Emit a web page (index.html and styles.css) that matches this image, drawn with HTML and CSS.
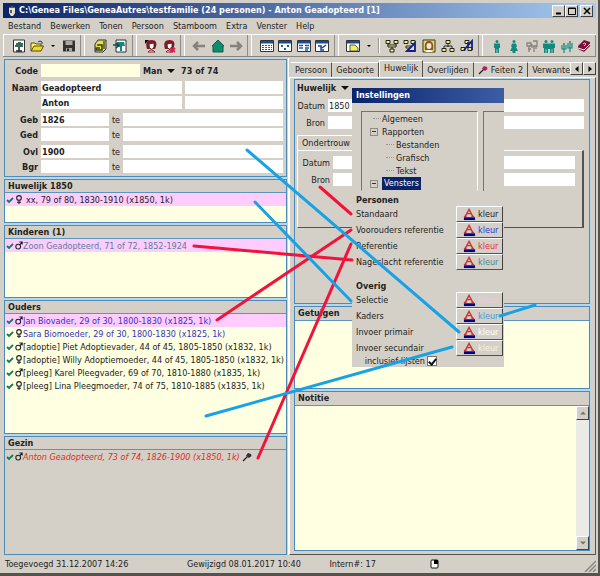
FILE: index.html
```html
<!DOCTYPE html>
<html lang="nl">
<head>
<meta charset="utf-8">
<title>testfamilie - Anton Geadopteerd</title>
<link rel="stylesheet" href="styles.css">
</head>
<body>
<svg class="defs" aria-hidden="true">
  <symbol id="check" viewBox="0 0 8 8"><path d="M1 4l2 2 4-4" fill="none" stroke="#177a55" stroke-width="1.8"/></symbol>
  <symbol id="male" viewBox="0 0 8 9"><circle cx="3.2" cy="5.6" r="2.4" fill="none" stroke="#222" stroke-width="1.1"/><path d="M4.8 3.8L7 1.2M4.4 1H7.2V3.6" fill="none" stroke="#222" stroke-width="1.1"/></symbol>
  <symbol id="female" viewBox="0 0 8 9"><circle cx="4" cy="2.9" r="2.3" fill="none" stroke="#222" stroke-width="1.1"/><path d="M4 5.2V9M2 7.2H6" fill="none" stroke="#222" stroke-width="1.1"/></symbol>
  <symbol id="pin" viewBox="0 0 10 10"><path d="M1 9l5-5" stroke="#222" stroke-width="1.2"/><path d="M4 3.5L6 1l3 1 .5 2L7 6z" fill="currentColor"/></symbol>
  <symbol id="font" viewBox="0 0 14 14"><path d="M2.500 9L6.500 1.500L10.500 9M4.500 6h4.500M1 9h3M9 9h3" fill="none" stroke="#c93434" stroke-width="1.5"/><path d="M1 10h12v3H1z" fill="#00008b"/></symbol>
  <symbol id="man" viewBox="0 0 14 14"><circle cx="7" cy="2.5" r="1.5"/><path d="M4 4.5h6V9H9v5H7.4v-4h-.8v4H5V9H4z"/></symbol>
  <symbol id="woman" viewBox="0 0 14 14"><circle cx="7" cy="2.5" r="1.5"/><path d="M5 4.5h4l1 3-1 .5 2 4H8.5v2h-3v-2H3l2-4-1-.5z"/></symbol>
  <symbol id="win" viewBox="0 0 14 14"><path d="M.5 1.5h13v11H.5z" fill="#fff" stroke="#333"/><path d="M1 2h12v2.5H1z" fill="#174ba0"/></symbol>
  <symbol id="head" viewBox="0 0 14 14"><path d="M3 10C1 4 3 1 7.500 1S14 4 11 10z" fill="#8a1824"/><path d="M5 5l5-1v4L8 10.500 5.500 9z" fill="#fff" stroke="#222" stroke-width=".8"/><path d="M4 13q3-4 7 0z" fill="#fff" stroke="#8a1824"/></symbol>
</svg>
<div class="window">
  <header class="titlebar">
    <svg class="logo" viewBox="0 0 10 12"><path d="M2 3l3-2 3 2v5l-2 3H4L2 8z" fill="#e8e0c4"/><path d="M3 2h4M4 5v3" stroke="#27344c" stroke-width="1.5"/></svg>
    <h1>C:\Genea Files\GeneaAutres\testfamilie (24 personen) - Anton Geadopteerd [1]</h1>
    <button class="cap" aria-label="Minimaliseren"><svg viewBox="0 0 8 8"><path d="M1 6.500h5" stroke="#000" stroke-width="2"/></svg></button>
    <button class="cap" aria-label="Maximaliseren"><svg viewBox="0 0 8 8"><path d="M.5 1h7v6.500h-7zM.5 1.500h7" fill="none" stroke="#000"/></svg></button>
    <button class="cap close" aria-label="Sluiten"><svg viewBox="0 0 8 8"><path d="M1 1l6 6M7 1L1 7" stroke="#000" stroke-width="1.500"/></svg></button>
  </header>
  <nav class="menu">
    <button>Bestand</button><button>Bewerken</button><button>Tonen</button><button>Persoon</button><button>Stamboom</button><button>Extra</button><button>Venster</button><button>Help</button>
  </nav>
  <div class="toolbar">
    <div class="group">
      <button aria-label="Nieuw"><svg viewBox="0 0 14 14"><path d="M1.500 1h11v12h-11z" fill="#fff" stroke="#333"/><path d="M7 5v7M4 12h6" stroke="#222" stroke-width="1.500"/><path d="M3 6h1V4h2V3h3v1h2v4H8V7H6v1H3z" fill="#3a6b5a"/></svg></button>
      <button aria-label="Openen"><svg viewBox="0 0 14 14"><path d="M1 12V4h4l1 1h5v2" fill="#fff36a" stroke="#554c10"/><path d="M1 12l3-5h9.500L11 12z" fill="#f0dc20" stroke="#554c10"/><path d="M8 3q2-2 4 0v2" fill="none" stroke="#234"/></svg></button>
      <button class="caret" aria-label="Recent"><svg viewBox="0 0 8 14"><path d="M2 6h4L4 8z"/></svg></button>
      <button aria-label="Opslaan"><svg viewBox="0 0 14 14"><path d="M1 1.500h12v11H1z" fill="#333"/><path d="M3.500 2h7v4h-7zM4 9h6v3.500H4z" fill="#aaa89c"/><path d="M5 9.500h2V12H5z" fill="#222"/></svg></button>
    </div>
    <div class="group">
      <button aria-label="Kopie"><svg viewBox="0 0 14 14"><path d="M5 1h8v9l-3 3H2V5z" fill="#e4df55" stroke="#333"/><path d="M4 6h5v5H3v-2h4" fill="none" stroke="#303c20" stroke-width="1.500"/><path d="M11 2v8" stroke="#7b762f" stroke-width="2"/></svg></button>
      <button aria-label="Boom"><svg viewBox="0 0 14 14"><path d="M3 1h10v12H3z" fill="#fff" stroke="#333"/><path d="M4 3h7l1 4H9v5H7V8H4z" fill="#168a78"/><path d="M0 6h5M3 4l3 2-3 3" fill="none" stroke="#0c4b55" stroke-width="1.500"/></svg></button>
    </div>
    <div class="group">
      <button aria-label="Persoon toevoegen"><svg viewBox="0 0 14 14"><use href="#head"/><path d="M1 1h4L1 5z"/></svg></button>
      <button aria-label="Persoon verwijderen"><svg viewBox="0 0 14 14"><use href="#head"/><path d="M8 9l5 4M13 9l-5 4" stroke="#e01c52" stroke-width="2"/></svg></button>
    </div>
    <div class="group">
      <button aria-label="Vorige"><svg viewBox="0 0 14 14"><path d="M13 7H3M6 3L2 7l4 4" fill="none" stroke="#85827d" stroke-width="2.500"/></svg></button>
      <button aria-label="Thuis"><svg viewBox="0 0 14 14"><path d="M7 1l6 6h-1v6H2V7H1z" fill="#0a8d70" stroke="#155949"/></svg></button>
      <button aria-label="Volgende"><svg viewBox="0 0 14 14"><path d="M1 7h10M8 3l4 4-4 4" fill="none" stroke="#85827d" stroke-width="2.500"/></svg></button>
    </div>
    <div class="group">
      <button aria-label="Tabel"><svg viewBox="0 0 14 14"><use href="#win"/><path d="M2 6.500h10M2 8.500h10M2 10.500h10" stroke="#555" stroke-dasharray="2 1"/></svg></button>
      <button aria-label="Grafiek"><svg viewBox="0 0 14 14"><use href="#win"/><path d="M3 6h2v2H3zM9 6h2v2H9zM6 9h2v2H6z" fill="#185cad"/></svg></button>
      <button aria-label="Lijst"><svg viewBox="0 0 14 14"><use href="#win"/><path d="M2 6.500h4M2 9h4M8 6.500h4M8 9h4M8 11h3" stroke="#185cad" stroke-width="1.500"/></svg></button>
      <button aria-label="Overzicht"><svg viewBox="0 0 14 14"><use href="#win"/><path d="M3 7h3v4h3M7 9l4-3" fill="none" stroke="#173f92" stroke-width="1.500"/></svg></button>
    </div>
    <div class="group">
      <button aria-label="Venster"><svg viewBox="0 0 14 14"><use href="#win"/><path d="M4 6h5l3 3v3H4z" fill="#f4f05a" stroke="#333" stroke-width=".8"/></svg></button>
      <button class="caret" aria-label="Vensters"><svg viewBox="0 0 8 14"><path d="M2 6h4L4 8z"/></svg></button>
      <span class="sep"></span>
      <button aria-label="Kwartierstaat"><svg viewBox="0 0 14 14"><path d="M3 4v3h8V4M7 7v3" fill="none" stroke="#222"/><path d="M1 1.500h4v3H1zM9 1.500h4v3H9zM3 6h8v2H3zM5 10h4v3H5z" fill="#f4f078" stroke="#222"/></svg></button>
      <button aria-label="Kwartierblad"><svg viewBox="0 0 14 14"><path d="M1 1.500h4v3H1zM8 1.500h4v3H8zM3 7h5v2H3z" fill="#f4f078" stroke="#222"/><path d="M4 12L12 4v8z" fill="#ddd" stroke="#142080" stroke-width="1.800"/></svg></button>
      <button aria-label="Portret"><svg viewBox="0 0 14 14"><path d="M1 1h12v12H1z" fill="#e9dc63" stroke="#333"/><path d="M3 11C2 4 4 2 7 2s5 2 4 9z" fill="#8b5525"/><ellipse cx="7" cy="7" rx="2.500" ry="3" fill="#ffe4c8"/><path d="M3 13q4-4 8 0z" fill="#fff"/></svg></button>
      <button aria-label="Parenteel"><svg viewBox="0 0 14 14"><path d="M7 4v4M3 10V7h8v3" fill="none" stroke="#222"/><path d="M5 1.500h4v3H5zM1 9.500h4v3H1zM9 9.500h4v3H9z" fill="#f4f078" stroke="#222"/></svg></button>
      <button aria-label="Nageslacht"><svg viewBox="0 0 14 14"><path d="M5 1.500h4v3H5zM1 8.500h4v3H1zM8 8.500h4v3H8z" fill="#f4f078" stroke="#222"/><path d="M4 11L12 2v9M8 3v6" fill="none" stroke="#142080" stroke-width="1.800"/></svg></button>
    </div>
    <div class="group people">
      <button aria-label="Man"><svg viewBox="0 0 14 14"><use href="#man"/></svg></button>
      <button aria-label="Vrouw"><svg viewBox="0 0 14 14"><use href="#woman"/></svg></button>
      <button class="grey" aria-label="Onbekend"><svg viewBox="0 0 14 14"><path d="M2 4h4v3H2zM8 2h4v5H8M4 7v6M3 10h3M9 7v6M11 7v3M7 5v4" fill="none" stroke="currentColor" stroke-width="1.300"/></svg></button>
      <button aria-label="Paar"><svg viewBox="0 0 14 14"><use href="#man" x="-3"/><use href="#man" x="3"/><path d="M2 5h10v5H2z"/></svg></button>
      <button aria-label="Kinderen"><svg viewBox="0 0 14 14"><circle cx="4" cy="5" r="1"/><circle cx="10" cy="3" r="1"/><path d="M2 6v4h4V6M4 6v8M8 4v5h4V4M10 4v9" fill="none" stroke="currentColor" stroke-width="1.200"/></svg></button>
      <button aria-label="Help"><svg viewBox="0 0 14 14"><path d="M1 7l6-6 6 2v4l-6 6-6-3z" fill="#7c1039"/><path d="M1 9l6 2 6-6" fill="none" stroke="#fff"/><path d="M6 5q2-2 3 0L7 7" fill="none" stroke="#f4c0d0"/></svg></button>
    </div>
  </div>

  <main class="work">
    <div class="left">
      <form class="panel person">
        <div class="line"><label for="code">Code</label><input id="code" class="code"><button type="button" class="sex">Man <i class="down"></i></button><b>73 of 74</b></div>
        <div class="pair">
          <div class="line"><label for="naam">Naam</label><input id="naam" class="name" value="Geadopteerd"><input class="fill" aria-label="Achternaam extra"></div>
          <div class="line"><label for="voor"></label><input id="voor" class="name" value="Anton"><input class="fill" aria-label="Voornaam extra"></div>
        </div>
        <div class="pair">
          <div class="line"><label for="geb">Geb</label><input id="geb" class="date" value="1826"><label class="te" for="gebte">te</label><input id="gebte" class="fill"></div>
          <div class="line"><label for="ged">Ged</label><input id="ged" class="date"><label class="te" for="gedte">te</label><input id="gedte" class="fill"></div>
        </div>
        <div class="pair">
          <div class="line"><label for="ovl">Ovl</label><input id="ovl" class="date" value="1900"><label class="te" for="ovlte">te</label><input id="ovlte" class="fill"></div>
          <div class="line"><label for="bgr">Bgr</label><input id="bgr" class="date"><label class="te" for="bgrte">te</label><input id="bgrte" class="fill"></div>
        </div>
      </form>
      <section class="panel">
        <h2>Huwelijk 1850</h2>
        <ul><li class="sel"><svg class="ck"><use href="#check"/></svg><svg class="sx"><use href="#female"/></svg><span class="indent">xx, 79 of 80, 1830-1910 (x1850, 1k)</span></li></ul>
      </section>
      <section class="panel">
        <h2>Kinderen (1)</h2>
        <ul><li class="sel teal"><svg class="ck"><use href="#check"/></svg><svg class="sx"><use href="#male"/></svg><span>Zoon Geadopteerd, 71 of 72, 1852-1924</span></li></ul>
      </section>
      <section class="panel">
        <h2>Ouders</h2>
        <ul>
          <li class="sel blue"><svg class="ck"><use href="#check"/></svg><svg class="sx"><use href="#male"/></svg><span>Jan Biovader, 29 of 30, 1800-1830 (x1825, 1k)</span></li>
          <li class="blue"><svg class="ck"><use href="#check"/></svg><svg class="sx"><use href="#female"/></svg><span>Sara Biomoeder, 29 of 30, 1800-1830 (x1825, 1k)</span></li>
          <li><svg class="ck"><use href="#check"/></svg><svg class="sx"><use href="#male"/></svg><span>[adoptie] Piet Adoptievader, 44 of 45, 1805-1850 (x1832, 1k)</span></li>
          <li><svg class="ck"><use href="#check"/></svg><svg class="sx"><use href="#female"/></svg><span>[adoptie] Willy Adoptiemoeder, 44 of 45, 1805-1850 (x1832, 1k)</span></li>
          <li><svg class="ck"><use href="#check"/></svg><svg class="sx"><use href="#male"/></svg><span>[pleeg] Karel Pleegvader, 69 of 70, 1810-1880 (x1835, 1k)</span></li>
          <li><svg class="ck"><use href="#check"/></svg><svg class="sx"><use href="#female"/></svg><span>[pleeg] Lina Pleegmoeder, 74 of 75, 1810-1885 (x1835, 1k)</span></li>
        </ul>
      </section>
      <section class="panel plain">
        <h2>Gezin</h2>
        <ul><li class="red"><svg class="ck"><use href="#check"/></svg><svg class="sx"><use href="#male"/></svg><span>Anton Geadopteerd, 73 of 74, 1826-1900 (x1850, 1k)</span><svg class="pin"><use href="#pin"/></svg></li></ul>
      </section>
    </div>

    <div class="right">
      <div class="tabs" role="tablist">
        <button role="tab">Persoon</button><button role="tab">Geboorte</button><button role="tab" class="active" aria-selected="true">Huwelijk</button><button role="tab">Overlijden</button><button role="tab"><svg class="pin magenta"><use href="#pin"/></svg>Feiten 2</button><button role="tab" class="last">Verwante</button>
        <button class="scroll" aria-label="Tabs naar links"><svg viewBox="0 0 8 8"><path d="M5.500 1v6L2 4z"/></svg></button><button class="scroll" aria-label="Tabs naar rechts"><svg viewBox="0 0 8 8"><path d="M2.500 1v6L6 4z"/></svg></button>
      </div>
      <div class="page">
        <form class="panel marriage">
          <button type="button" class="kind">Huwelijk <i class="down"></i></button>
          <div class="line"><label for="hd">Datum</label><input id="hd" class="fill" value="1850"></div>
          <div class="line"><label for="hb">Bron</label><input id="hb" class="fill"></div>
          <button type="button" class="subtab">Ondertrouw</button>
          <fieldset>
            <div class="line"><label for="od">Datum</label><input id="od" class="fill"></div>
            <div class="line"><label for="ob">Bron</label><input id="ob" class="fill"></div>
          </fieldset>
        </form>
        <section class="panel">
          <h2>Getuigen</h2>
        </section>
        <section class="panel note">
          <h2><label for="note">Notitie</label></h2>
          <div class="notebox">
            <textarea id="note"></textarea>
            <div class="bar"><button aria-label="Omhoog"><svg viewBox="0 0 8 8"><path d="M1 5.500h6L4 2.500z"/></svg></button><button aria-label="Omlaag"><svg viewBox="0 0 8 8"><path d="M1 2.500h6L4 5.500z"/></svg></button></div>
          </div>
        </section>
      </div>
    </div>
  </main>

  <footer class="status"><span>Toegevoegd 31.12.2007 14:26</span><span>Gewijzigd 08.01.2017 10:40</span><span>Intern#: 17</span><svg class="mouse" viewBox="0 0 9 10"><rect x="1" y="1" width="7" height="8" rx="1" fill="#fff" stroke="#111"/><path d="M4 1h4v4H4z"/></svg><svg class="grip" viewBox="0 0 12 12"><path d="M1 12L12 1M5 12l7-7M9 12l3-3" stroke="#8b8882" stroke-width="1.500"/></svg></footer>

  <div class="dialog" role="dialog" aria-label="Instellingen">
    <h2>Instellingen</h2>
    <div class="panes">
      <ul class="tree">
        <li class="top">Algemeen</li>
        <li class="top open"><i></i>Rapporten</li>
        <li class="sub">Bestanden</li>
        <li class="sub">Grafisch</li>
        <li class="sub">Tekst</li>
        <li class="top open"><i></i><b>Vensters</b></li>
      </ul>
      <div class="side"></div>
    </div>
    <h3>Personen</h3>
    <div class="opt"><span>Standaard</span><button><svg><use href="#font"/></svg>kleur</button></div>
    <div class="opt"><span>Voorouders referentie</span><button class="c-blue"><svg><use href="#font"/></svg>kleur</button></div>
    <div class="opt"><span>Referentie</span><button class="c-red"><svg><use href="#font"/></svg>kleur</button></div>
    <div class="opt"><span>Nageslacht referentie</span><button class="c-teal"><svg><use href="#font"/></svg>kleur</button></div>
    <h3 class="second">Overig</h3>
    <div class="opt"><span>Selectie</span><button class="c-pink"><svg><use href="#font"/></svg>kleur</button></div>
    <div class="opt"><span>Kaders</span><button class="c-sky"><svg><use href="#font"/></svg>kleur</button></div>
    <div class="opt"><span>Invoer primair</span><button class="c-white"><svg><use href="#font"/></svg>kleur</button></div>
    <div class="opt"><span>Invoer secundair</span><button class="c-cream"><svg><use href="#font"/></svg>kleur</button></div>
    <label class="incl">inclusief lijsten<input type="checkbox" checked></label>
  </div>

  <svg class="links" viewBox="0 0 600 576" aria-hidden="true">
    <g stroke="#f0143c"><path d="M194 246L352 260M217 320L351 230M258 458L351 244M320 187L351 214"/></g>
    <g stroke="#18a2e6"><path d="M247 150L459 332M255 202L351 301M206 416L452 347M500 316L535 305"/></g>
  </svg>
</div>
</body>
</html>
```
FILE: styles.css
```css
* { box-sizing: border-box; }
body, h1, h2, h3, ul, fieldset { margin: 0; padding: 0; }
body { background: #d4d0c8; }
body, button, input, textarea { font-family: "DejaVu Sans Condensed", "DejaVu Sans", sans-serif; font-size: 9px; color: #222; }
h1, h2, h3 { font-size: 9px; }
button { padding: 0; border: 0; background: none; white-space: nowrap; }
input { border: 0; border-radius: 0; padding: 0 1px; height: 13px; min-width: 0; background: #fff; }
ul { list-style: none; }
svg { display: block; flex: none; }
.defs { position: absolute; width: 0; height: 0; }

.window {
  position: relative;
  display: flex;
  flex-direction: column;
  height: 100vh;
  min-height: 560px;
  padding: 3px 2px 1px 3px;
  background: #d4d0c8;
  border-right: 2px solid #55534e;
  border-bottom: 3px solid #55534e;
}

.titlebar { display: flex; align-items: center; height: 15px; padding: 0 3px 0 4px; background: linear-gradient(90deg, #0a246a, #a6caf0); }
.titlebar h1 { flex: 1; line-height: 15px; color: #fff; white-space: nowrap; }
.logo { width: 10px; height: 12px; margin-right: 2px; }
.cap, .scroll, .bar button { background: #d4d0c8; border: 1px solid; border-color: #fff #404040 #404040 #fff; }
.cap { display: grid; place-items: center; width: 13px; height: 12px; }
.cap svg { width: 8px; height: 8px; }
.close { margin-left: 2px; }

.menu { display: flex; align-items: center; gap: 9px; height: 16px; padding-left: 5px; }

.toolbar { display: grid; grid-template-columns: 78fr 48fr 45fr 64fr 83fr 141fr 113fr; gap: 3px; height: 23px; border-top: 1px solid #fff; border-bottom: 1px solid #88857e; }
.group { display: flex; align-items: center; justify-content: space-evenly; border-left: 1px solid #fff; border-right: 1px solid #8f8c85; padding-left: 3px; }
.group svg { width: 14px; height: 14px; }
.group .caret svg { width: 8px; }
.sep { width: 2px; height: 15px; border-left: 1px solid #999; border-right: 1px solid #fff; }
.people button { color: #128a80; }
.people svg { fill: currentColor; }
.people .grey { color: #85827d; }

.work { flex: 1; min-height: 0; display: grid; grid-template-columns: 285fr 308fr; padding-top: 1px; }
.left { display: grid; grid-template-rows: 118px 44px 73px 134px 1fr; gap: 2px; padding: 1px 1px 0; background: #b9d7ea; min-width: 0; }
.panel { border: 1px solid #4c8ab8; background: #ffffe1; min-width: 0; overflow: hidden; }
.panel h2 { height: 13px; padding-left: 3px; line-height: 12px; background: #d4d0c8; border-bottom: 1px solid #5b95bd; }
.plain, .person, .marriage { background: #d4d0c8; }
.panel li { display: flex; align-items: center; height: 13px; padding-left: 1px; white-space: nowrap; }
.ck { width: 8px; height: 8px; margin-right: 1px; }
.sx { width: 8px; height: 9px; margin-right: 0; }
.indent { padding-left: 3px; }
.sel { background: #ffccff; }
.teal { color: #5a8094; }
.blue { color: #3535c4; }
.red { color: #e02c22; font-style: italic; }
.pin { width: 10px; height: 10px; margin-left: 2px; color: #333; }

.person { display: flex; flex-direction: column; gap: 4px; padding: 4px 3px; }
.pair { display: flex; flex-direction: column; gap: 2px; }
.line { display: flex; align-items: center; height: 13px; }
.fill { flex: 1; }
.person label { width: 30px; margin-right: 3px; text-align: right; font-weight: bold; }
.person input, .person b, .sex { font-weight: bold; }
.person .te { width: 14px; margin: 0; text-align: center; font-weight: normal; }
.person .code { width: 99px; background: #ffffe1; margin-right: 3px; }
.sex { margin-right: 6px; }
.down { display: inline-block; margin-left: 2px; vertical-align: 1px; border: 4px solid transparent; border-top: 4px solid #111; border-bottom: 0; }
.name { width: 141px; margin-right: 3px; }
.date { width: 68px; }

.right { display: flex; flex-direction: column; min-width: 0; min-height: 0; border-left: 1px solid #fff; }
.tabs { display: flex; height: 19px; padding: 4px 1px 0 2px; }
.tabs button { display: flex; align-items: center; padding: 0 4px; border-top: 1px solid #fff; border-right: 1px solid #55534e; }
.tabs button.active { margin-top: -2px; padding-bottom: 2px; border-left: 1px solid #fff; }
.tabs .pin { margin: 0 3px 0 0; }
.tabs .magenta { color: #b02060; }
.tabs button.last { flex: 1; padding: 0 0 0 4px; border-right: 0; }
.tabs button.scroll { width: 13px; height: 13px; flex: none; padding: 0; justify-content: center; border: 1px solid; border-color: #fff #404040 #404040 #fff; }
.scroll svg, .bar svg { width: 8px; height: 8px; }
.page { flex: 1; min-height: 0; display: grid; grid-template-rows: 225px 83px 1fr; gap: 2px; padding: 1px 5px 3px 4px; border: 1px solid; border-color: #fff #55534e #55534e #fff; }
.page .panel { box-shadow: 0 0 0 1px #b9d7ea; }
.page .panel h2 { height: 14px; line-height: 13px; }
.marriage { padding: 1px 5px 4px 2px; }
.kind { display: block; height: 13px; margin-bottom: 5px; font-weight: bold; }
.marriage label { width: 28px; margin-right: 3px; text-align: right; }
.marriage .line + .line { margin-top: 4px; }
.subtab { display: block; height: 15px; margin-top: 6px; padding: 0 4px; border: 1px solid #fff; border-bottom: 0; }
.marriage fieldset { height: 78px; padding: 5px 7px 0 4px; border: 1px solid; border-color: #fff #55534e #55534e #fff; border-right-width: 2px; }

.note { display: flex; flex-direction: column; }
.notebox { flex: 1; display: flex; min-height: 0; }
textarea { flex: 1; min-width: 0; border: 0; padding: 2px; resize: none; background: #ffffe1; }
.bar { display: flex; flex-direction: column; justify-content: space-between; width: 13px; background: #eceae5; }
.bar button { display: grid; place-items: center; height: 14px; fill: #77746e; }

.status { display: grid; grid-template-columns: 185fr 145fr 102fr 1fr 160fr; align-items: center; height: 17px; padding-left: 2px; white-space: nowrap; }
.mouse { width: 9px; height: 10px; }
.grip { width: 12px; height: 12px; justify-self: end; align-self: end; }

.dialog { position: absolute; left: 352px; top: 88px; width: 152px; background: #d4d0c8; white-space: nowrap; padding-bottom: 1px; }
.dialog h2 { height: 15px; padding-left: 4px; line-height: 15px; color: #fff; background: linear-gradient(90deg, #0a246a, #3c5ea4); }
.panes { display: grid; grid-template-columns: 117px 1fr; gap: 5px; padding: 8px 0 0 9px; }
.tree { border: 1px solid; border-color: #77746e #fff transparent #77746e; padding-left: 8px; }
.side { border-top: 1px solid #77746e; border-left: 1px solid #77746e; }
.tree li { display: flex; align-items: center; height: 13px; }
.tree .top::before { content: ""; width: 8px; margin: 0 1px 0 3px; border-top: 1px dotted #999; }
.tree .open::before { display: none; }
.tree .open i { display: grid; place-items: center; width: 8px; height: 8px; margin-right: 4px; border: 1px solid #8f8c85; }
.tree .open i::before { content: ""; width: 4px; height: 1px; background: #333; }
.tree .sub { padding-left: 16px; }
.tree .sub::before { content: ""; width: 8px; margin-right: 2px; border-top: 1px dotted #999; }
.tree b { height: 13px; padding: 0 2px; line-height: 12px; font-weight: normal; color: #fff; background: #0a246a; }
.dialog h3 { height: 15px; padding: 4px 0 0 4px; line-height: 11px; }
.dialog .second { height: 22px; padding-top: 11px; }
.opt { display: flex; justify-content: space-between; align-items: center; height: 16px; padding: 0 1px 0 4px; }
.opt button { display: flex; align-items: center; width: 47px; height: 16px; padding-left: 6px; border: 1px solid; border-color: #fff #404040 #55534e #fff; }
.opt svg { width: 13px; height: 13px; margin-right: 2px; }
.opt .c-blue { color: #3232e0; }
.opt .c-red { color: #e83030; }
.opt .c-teal { color: #4a8a8c; }
.opt .c-pink { color: #e6cbe2; }
.opt .c-sky { color: #4f94dc; }
.opt .c-white { color: #fff; }
.opt .c-cream { color: #f3f2dc; }
.incl { display: flex; align-items: center; justify-content: flex-end; gap: 2px; height: 10px; padding-right: 67px; }
.incl input { appearance: none; width: 10px; height: 10px; margin: 0; padding: 0; border: 1px solid #77746e; display: grid; place-items: center; }
.incl input:checked::before { content: ""; width: 3px; height: 6px; border: solid #111; border-width: 0 2px 2px 0; transform: rotate(40deg); }

.links { position: absolute; left: 0; top: 0; width: 600px; height: 576px; pointer-events: none; fill: none; stroke-width: 3; stroke-linecap: round; }
```
